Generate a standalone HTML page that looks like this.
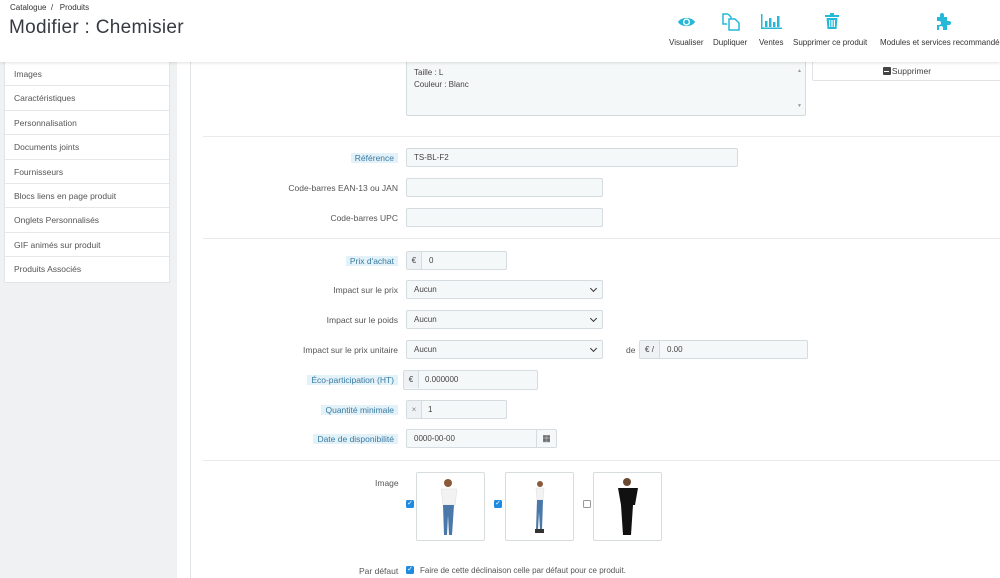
<!DOCTYPE html>
<html><head><meta charset="utf-8"><style>
*{box-sizing:border-box;margin:0;padding:0}
body{width:1000px;height:578px;overflow:hidden;background:#fff;font-family:"Liberation Sans",sans-serif;color:#555;font-size:9px;position:relative}
.a{position:absolute}
#hdr{left:0;top:0;width:1000px;height:62px;background:#fff;box-shadow:0 1px 3px rgba(0,0,0,.12);z-index:5}
#side{left:0;top:62px;width:177px;height:516px;background:#eff1f2}
.menu{left:4px;top:62px;width:166px;background:#fff;border:1px solid #e2e5e7;border-top:none}
.menu div{height:24.4px;line-height:24px;padding-left:9px;border-bottom:1px solid #e5e8ea;font-size:8.5px;color:#555}
.line{left:190px;top:62px;width:1px;height:516px;background:#e1e4e6}
.hr{left:203px;width:797px;height:1px;background:#e8eaec}
.lbl{right:602px;font-size:8.5px;color:#555;text-align:right;line-height:16px}
.hl{background:#e3f1f8;color:#3a7ba1;padding:0 4px}
.inp{background:#f5f8f9;border:1px solid #d5dce0;border-radius:2px;height:19px;line-height:17px;padding-left:7px;font-size:8px;color:#444}
.add{background:#eef2f4;border-right:1px solid #d5dce0;position:absolute;left:0;top:0;height:17px;text-align:center;font-size:8px;color:#444}
.sel::after{content:"";position:absolute;right:6px;top:5px;width:4px;height:4px;border-right:1.5px solid #333;border-bottom:1.5px solid #333;transform:rotate(45deg)}
.ic{top:13px;text-align:center;font-size:8px;color:#333}
.box{top:472px;width:69px;height:69px;border:1px solid #d7dcdf;border-radius:2px;background:#fff}
.cb{width:8px;height:8px;border-radius:1.5px;background:#1e8ae0;color:#fff;font-size:7px;line-height:8px;text-align:center}
</style></head><body>
<div class="a" id="hdr">
 <div class="a" style="left:10px;top:3px;font-size:8px;color:#333">Catalogue &nbsp;/ &nbsp; Produits</div>
 <div class="a" style="left:9px;top:17px;font-size:19px;color:#363a41;letter-spacing:.3px">Modifier : Chemisier</div>
 <svg class="a" style="left:677px;top:15px" width="19" height="14" viewBox="0 0 19 14"><path d="M1 7C4 1.5 15 1.5 18 7C15 12.5 4 12.5 1 7Z" fill="#25b9d7"/><circle cx="9.5" cy="7" r="3.6" fill="#fff"/><circle cx="9.5" cy="7" r="2.2" fill="#25b9d7"/></svg>
 <svg class="a" style="left:722px;top:13px" width="18" height="18" viewBox="0 0 18 18" fill="none" stroke="#25b9d7" stroke-width="1.5"><path d="M6 1H1v10h4M6 1l3 3v2"/><path d="M7 6h6l4 4v7H7Z"/></svg>
 <svg class="a" style="left:761px;top:14px" width="21" height="15" viewBox="0 0 21 15" fill="#25b9d7"><rect x="0" y="0" width="1.5" height="15"/><rect x="0" y="13.5" width="21" height="1.5"/><rect x="4" y="7" width="2.5" height="6"/><rect x="8" y="4" width="2.5" height="9"/><rect x="12" y="8" width="2.5" height="5"/><rect x="16" y="2" width="2.5" height="11"/></svg>
 <svg class="a" style="left:825px;top:13px" width="14" height="16" viewBox="0 0 14 16" fill="#25b9d7"><rect x="0" y="2" width="14" height="2"/><rect x="5" y="0" width="4" height="2"/><path d="M1.5 5h11l-1 11h-9Z"/><rect x="4" y="7" width="1.2" height="7" fill="#fff"/><rect x="6.4" y="7" width="1.2" height="7" fill="#fff"/><rect x="8.8" y="7" width="1.2" height="7" fill="#fff"/></svg>
 <svg class="a" style="left:933px;top:13px" width="18" height="18" viewBox="0 0 18 18" fill="#25b9d7"><path d="M4 4h3V2a2 2 0 0 1 4 0v2h3v4h2a2 2 0 0 1 0 4h-2v5h-4v-2a2 2 0 0 0-4 0v2H4v-5h2a2 2 0 0 0 0-4H4Z"/></svg>
 <div class="a ic" style="left:669px;top:38px">Visualiser</div>
 <div class="a ic" style="left:713px;top:38px">Dupliquer</div>
 <div class="a ic" style="left:759px;top:38px">Ventes</div>
 <div class="a ic" style="left:793px;top:38px">Supprimer ce produit</div>
 <div class="a ic" style="left:880px;top:38px;white-space:nowrap">Modules et services recommandés</div>
</div>
<div class="a" id="side"></div>
<div class="a menu">
 <div>Images</div><div>Caractéristiques</div><div>Personnalisation</div><div>Documents joints</div><div>Fournisseurs</div><div>Blocs liens en page produit</div><div>Onglets Personnalisés</div><div>GIF animés sur produit</div><div style="border-bottom:none">Produits Associés</div>
</div>
<div class="a line"></div>
<div class="a inp" style="left:406px;top:60px;width:400px;height:56px;line-height:12px;padding-top:6px">Taille : L<br>Couleur : Blanc<span class="a" style="right:3px;top:4px;font-size:5px;color:#999">▲</span><span class="a" style="right:3px;bottom:3px;font-size:5px;color:#999">▼</span></div>
<div class="a" style="left:812px;top:60px;width:190px;height:21px;border:1px solid #dfe3e6;border-radius:2px;text-align:center;line-height:20px;font-size:8.5px;color:#444"><span style="display:inline-block;width:8px;height:8px;background:#444;border-radius:1px;vertical-align:-1px;position:relative;margin-right:1px"><span style="position:absolute;left:1.5px;top:3.5px;width:5px;height:1px;background:#fff"></span></span>Supprimer</div>
<div class="a hr" style="top:136px"></div>
<div class="a lbl" style="top:150px"><span class="hl">Référence</span></div>
<div class="a inp" style="left:406px;top:148px;width:332px">TS-BL-F2</div>
<div class="a lbl" style="top:180px">Code-barres EAN-13 ou JAN</div>
<div class="a inp" style="left:406px;top:178px;width:197px"></div>
<div class="a lbl" style="top:210px">Code-barres UPC</div>
<div class="a inp" style="left:406px;top:208px;width:197px"></div>
<div class="a hr" style="top:238px"></div>
<div class="a lbl" style="top:253px"><span class="hl">Prix d'achat</span></div>
<div class="a inp" style="left:406px;top:251px;width:101px;padding-left:22px"><span class="add" style="width:15px">€</span>0</div>
<div class="a lbl" style="top:282px">Impact sur le prix</div>
<div class="a inp sel" style="left:406px;top:280px;width:197px">Aucun</div>
<div class="a lbl" style="top:312px">Impact sur le poids</div>
<div class="a inp sel" style="left:406px;top:310px;width:197px">Aucun</div>
<div class="a lbl" style="top:342px">Impact sur le prix unitaire</div>
<div class="a inp sel" style="left:406px;top:340px;width:197px">Aucun</div>
<div class="a" style="left:626px;top:345px;font-size:8.5px">de</div>
<div class="a inp" style="left:639px;top:340px;width:169px;padding-left:27px"><span class="add" style="width:20px">€ /</span>0.00</div>
<div class="a lbl" style="top:372px"><span class="hl">Éco-participation (HT)</span></div>
<div class="a inp" style="left:403px;top:370px;width:135px;height:20px;padding-left:21px"><span class="add" style="width:15px">€</span>0.000000</div>
<div class="a lbl" style="top:402px"><span class="hl">Quantité minimale</span></div>
<div class="a inp" style="left:406px;top:400px;width:101px;padding-left:21px"><span class="add" style="width:15px;color:#888">×</span>1</div>
<div class="a lbl" style="top:431px"><span class="hl">Date de disponibilité</span></div>
<div class="a inp" style="left:406px;top:429px;width:151px">0000-00-00<span style="position:absolute;right:0;top:0;width:20px;height:17px;border-left:1px solid #d5dce0;text-align:center;font-size:9px">▦</span></div>
<div class="a hr" style="top:460px"></div>
<div class="a" style="left:375px;top:478px;font-size:8.5px">Image</div>
<div class="a cb" style="left:406px;top:500px">✓</div>
<div class="a cb" style="left:494px;top:500px">✓</div>
<div class="a" style="left:583px;top:500px;width:8px;height:8px;border:1px solid #999;border-radius:1.5px"></div>
<div class="a box" style="left:416px"><svg width="67" height="67" viewBox="0 0 67 67"><circle cx="31" cy="10" r="4" fill="#8a5a3a"/><path d="M24 16h16l-2 16h-12Z" fill="#f2f2f2" stroke="#ddd" stroke-width=".5"/><path d="M26 32h11l-2 30h-3l-1-20-1 20h-3Z" fill="#4a78a8"/></svg></div>
<div class="a box" style="left:505px"><svg width="67" height="67" viewBox="0 0 67 67"><circle cx="34" cy="11" r="3" fill="#8a5a3a"/><path d="M30 15h8l-1 12h-6Z" fill="#f2f2f2" stroke="#ddd" stroke-width=".5"/><path d="M31 27h6l-1 30h-2l-1-18-1 18h-2Z" fill="#4a78a8"/><rect x="29" y="56" width="9" height="4" fill="#333"/></svg></div>
<div class="a box" style="left:593px"><svg width="67" height="67" viewBox="0 0 67 67"><circle cx="33" cy="9" r="4" fill="#6a4a32"/><path d="M24 15h20l-3 17h-14Z" fill="#111"/><path d="M27 32h12l-2 30h-8Z" fill="#111"/></svg></div>
<div class="a" style="left:359px;top:566px;font-size:8.5px">Par défaut</div>
<div class="a cb" style="left:406px;top:566px">✓</div>
<div class="a" style="left:420px;top:566px;font-size:8px">Faire de cette déclinaison celle par défaut pour ce produit.</div>
</body></html>
